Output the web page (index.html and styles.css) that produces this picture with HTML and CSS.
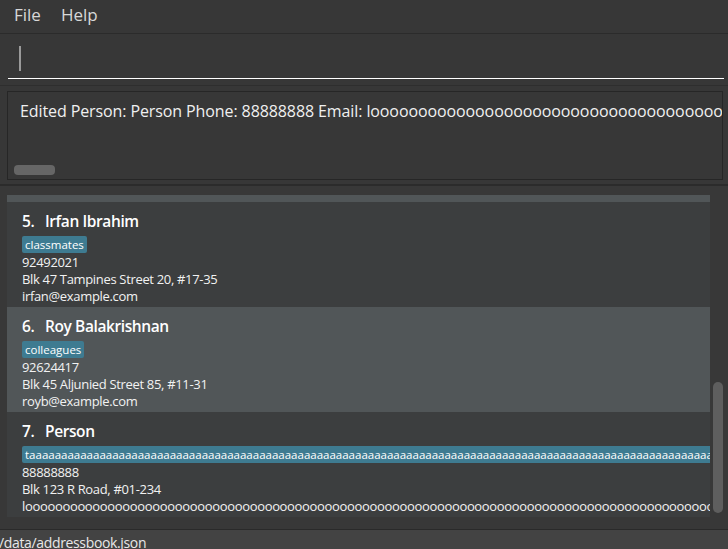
FILE: index.html
```
<!DOCTYPE html>
<html>
<head>
<meta charset="utf-8">
<link rel="stylesheet" href="styles.css">
</head>
<body>
<div class="app">
  <div class="menubar">
    <span class="menu">File</span>
    <span class="menu">Help</span>
  </div>
  <div class="command">
    <div class="input"><span class="caret"></span></div>
  </div>
  <div class="result-wrap">
    <div class="result">
      <div class="result-text">Edited Person: Person Phone: 88888888 Email: looooooooooooooooooooooooooooooooooooooooooooooooooooooooooooooooooooooooooooooooooooooooooooooooooo@example.com</div>
      <div class="hscroll"><div class="hthumb"></div></div>
    </div>
  </div>
  <div class="list-wrap">
    <div class="list">
      <div class="cells">
        <div class="cell odd">
          <div class="name"><span class="idx">4.</span>Charlotte Oliveiro</div>
          <div class="tags"><span class="tag">neighbours</span></div>
          <div class="details">
            <div class="line">93210283</div>
            <div class="line">Blk 11 Ang Mo Kio Street 74, #11-04</div>
            <div class="line">charlotte@example.com</div>
          </div>
        </div>
        <div class="cell even">
          <div class="name"><span class="idx">5.</span>Irfan Ibrahim</div>
          <div class="tags"><span class="tag">classmates</span></div>
          <div class="details">
            <div class="line">92492021</div>
            <div class="line">Blk 47 Tampines Street 20, #17-35</div>
            <div class="line">irfan@example.com</div>
          </div>
        </div>
        <div class="cell odd">
          <div class="name"><span class="idx">6.</span>Roy Balakrishnan</div>
          <div class="tags"><span class="tag">colleagues</span></div>
          <div class="details">
            <div class="line">92624417</div>
            <div class="line">Blk 45 Aljunied Street 85, #11-31</div>
            <div class="line">royb@example.com</div>
          </div>
        </div>
        <div class="cell even">
          <div class="name"><span class="idx">7.</span>Person</div>
          <div class="tags"><span class="tag">taaaaaaaaaaaaaaaaaaaaaaaaaaaaaaaaaaaaaaaaaaaaaaaaaaaaaaaaaaaaaaaaaaaaaaaaaaaaaaaaaaaaaaaaaaaaaaaaaaaaaaaaaaaaaaaaaaaaaaaaaaaaaag</span></div>
          <div class="details">
            <div class="line">88888888</div>
            <div class="line">Blk 123 R Road, #01-234</div>
            <div class="line">looooooooooooooooooooooooooooooooooooooooooooooooooooooooooooooooooooooooooooooooooooooooooooooooooooooooooooooooooooo@example.com</div>
          </div>
        </div>
      </div>
      <div class="vscroll"><div class="vthumb"></div></div>
    </div>
  </div>
  <div class="status">/data/addressbook.json</div>
</div>
</body>
</html>
```
FILE: styles.css
```
* { box-sizing: border-box; }
html, body { margin: 0; padding: 0; }
body {
  width: 728px;
  height: 549px;
  overflow: hidden;
  background: #383838;
  font-family: "Open Sans", "Noto Sans", sans-serif;
  color: #ffffff;
}
.app {
  display: flex;
  flex-direction: column;
  height: 549px;
}
.menubar {
  height: 34px;
  background: #373737;
  border-bottom: 1px solid #2b2b2b;
  display: flex;
  align-items: center;
  padding-left: 14px;
  gap: 20px;
}
.menu {
  font-size: 17px;
  color: #d8d8d8;
  line-height: 20px;
  margin-top: -3px;
}
.command {
  height: 52px;
  background: #373737;
  padding: 11px 4px 0 8px;
  border-bottom: 1px solid #2e2e2e;
}
.input {
  height: 34px;
  border-bottom: 1px solid #ffffff;
  padding: 1px 0 0 11px;
}
.caret {
  display: block;
  width: 2px;
  height: 25px;
  background: #9a9a9a;
}
.result-wrap {
  height: 100px;
  background: #373737;
  padding: 5px 5px 6px 7px;
  border-bottom: 2px solid #2b2b2b;
}
.result {
  height: 89px;
  border: 1px solid #262626;
  background: #373737;
  display: flex;
  flex-direction: column;
  overflow: hidden;
}
.result-text {
  white-space: nowrap;
  overflow: hidden;
  font-size: 16px;
  color: #f0f0f0;
  padding: 8px 0 0 12px;
  line-height: 22px;
  letter-spacing: -0.1px;
  flex: 1;
}
.hscroll {
  height: 16px;
  padding: 2px 0 0 6px;
}
.hthumb {
  width: 41px;
  height: 10px;
  border-radius: 4px;
  background: #666666;
}
.list-wrap {
  flex: 1;
  background: #383838;
  padding: 9px 4px 12px 7px;
  border-bottom: 1px solid #2a2a2a;
}
.list {
  height: 100%;
  display: flex;
  overflow: hidden;
}
.cells {
  width: 703px;
  overflow: hidden;
  background: #383838;
}
.cells .cell:first-child { margin-top: -98px; padding-top: 3px; }
.cell {
  height: 105px;
  padding: 8px 0 0 15px;
  overflow: hidden;
  white-space: nowrap;
}
.even { background: #3c3e3f; }
.odd { background: #515658; }
.name {
  font-size: 15.5px;
  font-weight: 600;
  line-height: 23px;
  letter-spacing: -0.4px;
  color: #ffffff;
}
.idx { display: inline-block; width: 23px; }
.tags {
  margin-top: 3px;
  height: 17px;
  display: flex;
}
.tag {
  background: #3e7b91;
  color: #ffffff;
  font-size: 11.5px;
  line-height: 17px;
  padding: 0 3px;
  border-radius: 2px;
}
.details { margin-top: 1px; }
.line {
  font-size: 13px;
  line-height: 17px;
  letter-spacing: -0.33px;
  color: #f2f2f2;
}
.vscroll {
  width: 14px;
  padding: 187px 0 0 3px;
}
.vthumb {
  width: 10px;
  height: 131px;
  border-radius: 5px;
  background: #5e5e5e;
}
.status {
  height: 19px;
  background: #434343;
  font-size: 14px;
  line-height: 26px;
  letter-spacing: -0.35px;
  color: #e8e8e8;
  white-space: nowrap;
  margin-left: -1px;
  overflow: hidden;
}
```
